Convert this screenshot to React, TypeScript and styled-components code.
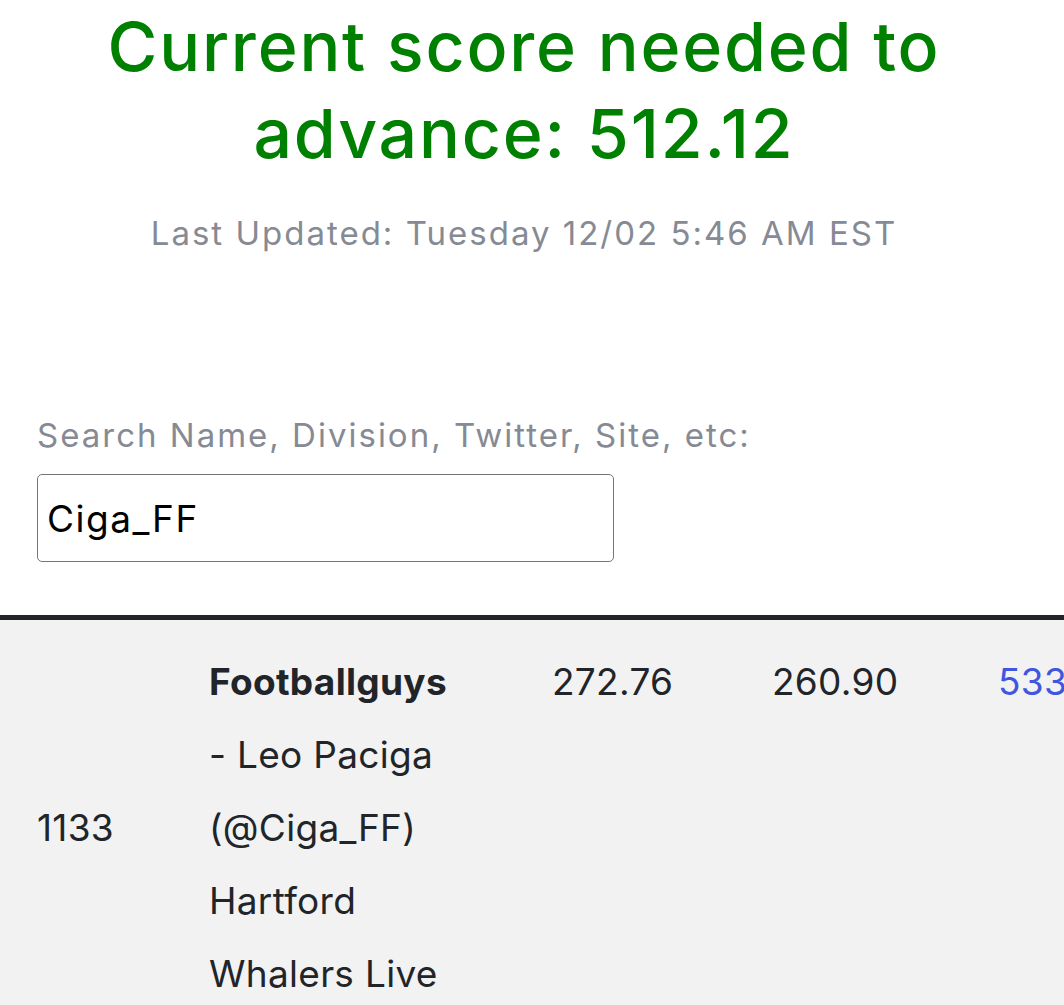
import React from 'react';
import styled, {createGlobalStyle} from 'styled-components';

const GlobalStyle = createGlobalStyle`
  html, body {
    margin: 0;
    padding: 0;
    overflow: hidden;
    background: #ffffff;
  }
  body {
    font-family: Inter, "Noto Sans", "Liberation Sans", sans-serif;
    color: #212529;
  }
`

const rows = [
    {
        rank: 1133,
        site: 'Footballguys',
        rest: '- Leo Paciga (@Ciga_FF) Hartford Whalers Live',
        week1: '272.76',
        week2: '260.90',
        total: '533',
    },
];

export default function App() {
    return (
        <>
            <GlobalStyle/>
            <PageStyle>
                <TitleStyle>Current score needed to advance: 512.12</TitleStyle>
                <UpdatedStyle>Last Updated: Tuesday 12/02 5:46 AM EST</UpdatedStyle>
                <SearchStyle>
                    <LabelStyle htmlFor="search">Search Name, Division, Twitter, Site, etc:</LabelStyle>
                    <InputStyle
                        id="search"
                        type="text"
                        defaultValue="Ciga_FF"
                        autoComplete="off"
                    />
                </SearchStyle>
            </PageStyle>
            <TableStyle>
                {rows.map(row => (
                    <RowStyle key={row.rank}>
                        <RankCell>{row.rank}</RankCell>
                        <NameCell>
                            <strong>{row.site}</strong> {row.rest}
                        </NameCell>
                        <Cell>{row.week1}</Cell>
                        <Cell>{row.week2}</Cell>
                        <Cell $link>{row.total}</Cell>
                    </RowStyle>
                ))}
            </TableStyle>
        </>
    );
}

const PageStyle = styled.div`
  padding: 3px 53px 0 37px;
`

const TitleStyle = styled.h1`
  margin: 0 auto;
  max-width: 900px;
  text-align: center;
  font-size: 68px;
  line-height: 87px;
  font-weight: 500;
  letter-spacing: 1.8px;
  color: #008000;
`

const UpdatedStyle = styled.p`
  margin: 32px 0 0;
  text-align: center;
  font-size: 33px;
  line-height: 48px;
  letter-spacing: 2px;
  color: #868a94;
`

const SearchStyle = styled.div`
  display: flex;
  flex-direction: column;
  align-items: flex-start;
  row-gap: 15px;
  margin-top: 154px;
`

const LabelStyle = styled.label`
  font-size: 33px;
  line-height: 48px;
  letter-spacing: 2px;
  color: #868a94;
`

const InputStyle = styled.input`
  box-sizing: border-box;
  width: 577px;
  height: 88px;
  padding: 0 9px;
  border: 1.5px solid #767676;
  border-radius: 5px;
  background: #fff;
  font-family: Inter, "Noto Sans", sans-serif;
  font-size: 37px;
  letter-spacing: 1.5px;
  color: #000;
  outline: none;
`

const TableStyle = styled.div`
  margin-top: 53px;
  width: 1160px;
  border-top: 5px solid #212529;
`

const RowStyle = styled.div`
  display: grid;
  grid-template-columns: 191px 343px 220px 226px 1fr;
  align-items: start;
  padding: 25px 0;
  background: #f2f2f2;
  font-size: 37px;
  line-height: 73px;
  letter-spacing: 0.3px;
`

const Cell = styled.div<{ $link?: boolean }>`
  padding-left: 18px;
  color: ${p => (p.$link ? '#4056e0' : '#212529')};
`

const RankCell = styled(Cell)`
  align-self: center;
  padding-left: 37px;
`

const NameCell = styled(Cell)`
  max-width: 252px;
  strong {
    font-weight: 700;
  }
`
